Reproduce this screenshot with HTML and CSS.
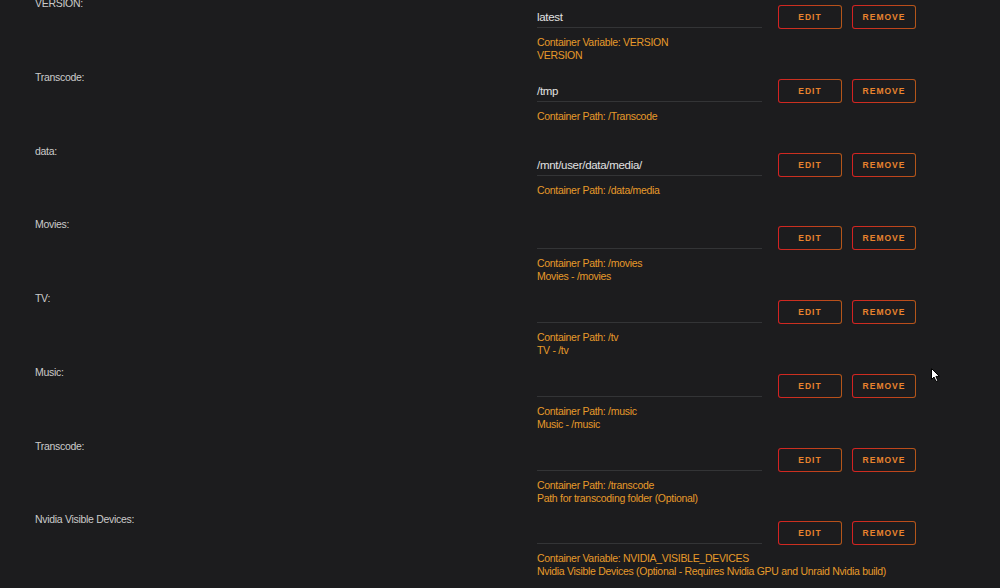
FILE: index.html
```html
<!DOCTYPE html>
<html lang="en">
<head>
    <meta charset="UTF-8">
    <title>Container Settings</title>
    <link rel="stylesheet" href="styles.css">
</head>
<body>
    <main class="config-list">

        <!-- VERSION -->
        <div class="config-row">
            <div class="config-label">VERSION:</div>
            <div class="config-body">
                <div class="config-field">
                    <div class="field-value">latest</div>
                    <div class="field-actions">
                        <button class="btn">EDIT</button>
                        <button class="btn">REMOVE</button>
                    </div>
                </div>
                <div class="config-desc">
                    Container Variable: VERSION<br>
                    VERSION
                </div>
            </div>
        </div>

        <!-- Transcode -->
        <div class="config-row">
            <div class="config-label">Transcode:</div>
            <div class="config-body">
                <div class="config-field">
                    <div class="field-value">/tmp</div>
                    <div class="field-actions">
                        <button class="btn">EDIT</button>
                        <button class="btn">REMOVE</button>
                    </div>
                </div>
                <div class="config-desc">Container Path: /Transcode</div>
            </div>
        </div>

        <!-- data -->
        <div class="config-row">
            <div class="config-label">data:</div>
            <div class="config-body">
                <div class="config-field">
                    <div class="field-value">/mnt/user/data/media/</div>
                    <div class="field-actions">
                        <button class="btn">EDIT</button>
                        <button class="btn">REMOVE</button>
                    </div>
                </div>
                <div class="config-desc">Container Path: /data/media</div>
            </div>
        </div>

        <!-- Movies -->
        <div class="config-row">
            <div class="config-label">Movies:</div>
            <div class="config-body">
                <div class="config-field">
                    <div class="field-value"></div>
                    <div class="field-actions">
                        <button class="btn">EDIT</button>
                        <button class="btn">REMOVE</button>
                    </div>
                </div>
                <div class="config-desc">
                    Container Path: /movies<br>
                    Movies - /movies
                </div>
            </div>
        </div>

        <!-- TV -->
        <div class="config-row">
            <div class="config-label">TV:</div>
            <div class="config-body">
                <div class="config-field">
                    <div class="field-value"></div>
                    <div class="field-actions">
                        <button class="btn">EDIT</button>
                        <button class="btn">REMOVE</button>
                    </div>
                </div>
                <div class="config-desc">
                    Container Path: /tv<br>
                    TV - /tv
                </div>
            </div>
        </div>

        <!-- Music -->
        <div class="config-row">
            <div class="config-label">Music:</div>
            <div class="config-body">
                <div class="config-field">
                    <div class="field-value"></div>
                    <div class="field-actions">
                        <button class="btn">EDIT</button>
                        <button class="btn">REMOVE</button>
                    </div>
                </div>
                <div class="config-desc">
                    Container Path: /music<br>
                    Music - /music
                </div>
            </div>
        </div>

        <!-- Transcode (optional) -->
        <div class="config-row">
            <div class="config-label">Transcode:</div>
            <div class="config-body">
                <div class="config-field">
                    <div class="field-value"></div>
                    <div class="field-actions">
                        <button class="btn">EDIT</button>
                        <button class="btn">REMOVE</button>
                    </div>
                </div>
                <div class="config-desc">
                    Container Path: /transcode<br>
                    Path for transcoding folder (Optional)
                </div>
            </div>
        </div>

        <!-- Nvidia -->
        <div class="config-row">
            <div class="config-label">Nvidia Visible Devices:</div>
            <div class="config-body">
                <div class="config-field">
                    <div class="field-value"></div>
                    <div class="field-actions">
                        <button class="btn">EDIT</button>
                        <button class="btn">REMOVE</button>
                    </div>
                </div>
                <div class="config-desc">
                    Container Variable: NVIDIA_VISIBLE_DEVICES<br>
                    Nvidia Visible Devices (Optional - Requires Nvidia GPU and Unraid Nvidia build)
                </div>
            </div>
        </div>
    </main>

    <!-- mouse pointer -->
    <svg class="pointer" width="10" height="15" viewBox="0 0 10 15">
        <path d="M0.5 0.5 L0.5 11.5 L3 9 L5 13.5 L6.8 12.7 L4.9 8.4 L8.4 8.4 Z" fill="#fff" stroke="#000" stroke-width="1"/>
    </svg>
</body>
</html>
```

FILE: styles.css
```css
/* Base */
body {
    margin: 0;
    background-color: #1c1c1e;
    font-family: "Liberation Sans", Arial, sans-serif;
    font-size: 10.5px;
    letter-spacing: -0.3px;
    color: #cbcbcb;
    overflow: hidden;
}

.config-list {
    margin-top: -4px;
    padding-left: 35px;
}

/* one setting */
.config-row {
    display: grid;
    grid-template-columns: 502px 1fr;
    height: 73.75px;
}

.config-label {
    line-height: 14px;
}

.config-body {
    padding-top: 9px;
}

.config-field {
    display: flex;
    align-items: flex-start;
    gap: 16px;
}

.field-value {
    width: 225px;
    height: 22px;
    line-height: 24px;
    border-bottom: 1px solid #333436;
    font-size: 11.5px;
    color: #e2e2e2;
}

.field-actions {
    display: flex;
    gap: 10px;
}

.btn {
    width: 64px;
    height: 24px;
    padding: 0;
    border: 1px solid transparent;
    border-radius: 3px;
    background: linear-gradient(#1c1c1e, #1c1c1e) padding-box,
                linear-gradient(90deg, #d42222, #b4561a) border-box;
    font-family: "Liberation Sans", Arial, sans-serif;
    font-size: 8.5px;
    font-weight: bold;
    letter-spacing: 1px;
    color: #e8832e;
    cursor: pointer;
}

.config-desc {
    margin-top: 7px;
    line-height: 13px;
    color: #e69a2a;
}

.pointer {
    position: absolute;
    left: 931px;
    top: 368px;
}
```
